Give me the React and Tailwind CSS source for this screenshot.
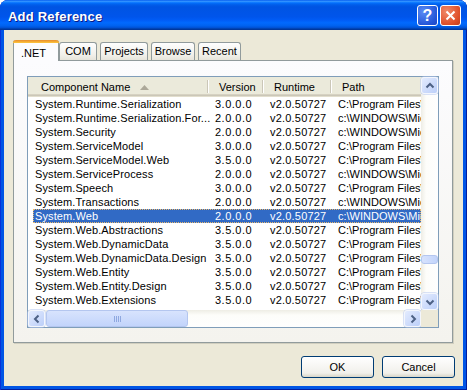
import React from "react";

const ROWS = [
  ["System.Runtime.Serialization", "3.0.0.0", "C:\\Program Files\\"],
  ["System.Runtime.Serialization.For...", "2.0.0.0", "c:\\WINDOWS\\Mic"],
  ["System.Security", "2.0.0.0", "c:\\WINDOWS\\Mic"],
  ["System.ServiceModel", "3.0.0.0", "C:\\Program Files\\"],
  ["System.ServiceModel.Web", "3.5.0.0", "C:\\Program Files\\"],
  ["System.ServiceProcess", "2.0.0.0", "c:\\WINDOWS\\Mic"],
  ["System.Speech", "3.0.0.0", "C:\\Program Files\\"],
  ["System.Transactions", "2.0.0.0", "c:\\WINDOWS\\Mic"],
  ["System.Web", "2.0.0.0", "c:\\WINDOWS\\Mic", true],
  ["System.Web.Abstractions", "3.5.0.0", "C:\\Program Files\\"],
  ["System.Web.DynamicData", "3.5.0.0", "C:\\Program Files\\"],
  ["System.Web.DynamicData.Design", "3.5.0.0", "C:\\Program Files\\"],
  ["System.Web.Entity", "3.5.0.0", "C:\\Program Files\\"],
  ["System.Web.Entity.Design", "3.5.0.0", "C:\\Program Files\\"],
  ["System.Web.Extensions", "3.5.0.0", "C:\\Program Files\\"],
];

const ARROWS = {
  up: "M1.5 6.5 L5 3 L8.5 6.5",
  down: "M1.5 3.5 L5 7 L8.5 3.5",
  left: "M6.5 1.5 L3 5 L6.5 8.5",
  right: "M3.5 1.5 L7 5 L3.5 8.5",
};

const Arrow = ({ dir }) => (
  <svg width="10" height="10" viewBox="0 0 10 10">
    <path d={ARROWS[dir]} fill="none" stroke="#4d6185" strokeWidth="2" />
  </svg>
);

const ScrollButton = ({ dir }) => (
  <div className="w-[17px] h-[17px] shrink-0 rounded-[3px] border border-[#f3f6fd] bg-[linear-gradient(135deg,#e3ebfe,#bccff9)] shadow-[0_0_0_0.5px_#b4c6ef] flex items-center justify-center">
    <Arrow dir={dir} />
  </div>
);

const Tab = ({ label, width }) => (
  <div
    className={`${width} h-[18px] shrink-0 rounded-t-[3px] border border-b-0 border-[#919b9c] bg-[linear-gradient(#fefefe,#f1f0ea_70%,#e6e4da)] flex items-center justify-center`}
  >
    {label}
  </div>
);

const HeaderCell = ({ label, width, pad, sort }) => (
  <div className={`${width} h-full shrink-0 flex items-center justify-between`}>
    <div className={`${pad} flex items-center gap-[10px]`}>
      <span>{label}</span>
      {sort && (
        <svg width="9" height="5" viewBox="0 0 9 5">
          <polygon points="0,5 4.5,0 9,5" fill="#aca899" />
        </svg>
      )}
    </div>
    <div className="w-[2px] h-[13px] mb-[2px] border-l border-[#cbc7b8] border-r border-r-white" />
  </div>
);

const DialogButton = ({ label }) => (
  <button className="w-[73px] h-[22px] rounded-[3px] border border-[#003c74] bg-[linear-gradient(#ffffff,#f1f0eb_80%,#d8d5c7)] text-black text-[11px]">
    {label}
  </button>
);

export default function App() {
  return (
    <div className="w-[467px] h-[390px] bg-white overflow-hidden font-['Liberation_Sans',Arial,sans-serif] text-[11px] text-black">
      <div className="w-full h-full rounded-t-[8px] bg-[#0055e5] flex flex-col shadow-[inset_1px_0_0_#0831d9,inset_-1px_0_0_#001ea0,inset_0_-1px_0_#001ea0]">
        {/* title bar */}
        <div className="h-[30px] shrink-0 rounded-t-[8px] bg-[linear-gradient(#0058ee_0%,#3593ff_4%,#288eff_6%,#127dff_8%,#036ffc_10%,#0262ee_14%,#0057e5_20%,#0054e3_24%,#0055eb_56%,#005bf5_66%,#026afe_76%,#0062ef_86%,#0052d6_92%,#0040ab_96%,#003092_100%)] flex items-center pl-[8px] pr-[6px]">
          <span className="flex-1 pt-[3px] text-white font-bold text-[13px] tracking-[0.2px] [text-shadow:1px_1px_0_#0a1883]">
            Add Reference
          </span>
          <div className="w-[21px] h-[21px] mt-[1px] rounded-[3px] border border-white bg-[radial-gradient(circle_at_30%_30%,#5a8cf5,#2456d8_70%,#1c46c4)] flex items-center justify-center text-white font-bold text-[16px] leading-none">
            ?
          </div>
          <div className="w-[21px] h-[21px] mt-[1px] ml-[2px] rounded-[3px] border border-white bg-[radial-gradient(circle_at_30%_30%,#f08a6a,#e0512b_65%,#c23d1c)] flex items-center justify-center">
            <svg width="11" height="11" viewBox="0 0 11 11">
              <path d="M1.5 1.5 L9.5 9.5 M9.5 1.5 L1.5 9.5" stroke="white" strokeWidth="2" />
            </svg>
          </div>
        </div>

        {/* client area */}
        <div className="flex-1 mx-[4px] mb-[4px] bg-[#ece9d8] pt-[10px] pl-[9px] flex flex-col">
          {/* tabs */}
          <div className="flex items-end h-[20px] relative z-10">
            <div className="w-[46px] h-[21px] -mb-[1px] shrink-0 rounded-t-[3px] border border-b-0 border-[#919b9c] border-t-0 bg-[#fcfcfe] flex flex-col">
              <div className="h-[3px] -mx-[1px] rounded-t-[3px] bg-[linear-gradient(#e68b2c,#ffc73c)]" />
              <div className="flex-1 pl-[7px] pt-[2px]">.NET</div>
            </div>
            <Tab label="COM" width="w-[38px]" />
            <div className="w-[3px]" />
            <Tab label="Projects" width="w-[48px]" />
            <div className="w-[3px]" />
            <Tab label="Browse" width="w-[44px]" />
            <div className="w-[3px]" />
            <Tab label="Recent" width="w-[43px]" />
          </div>

          {/* tab page */}
          <div className="w-[440px] h-[283px] border border-[#919b9c] bg-[linear-gradient(#fcfcfe,#f4f3ee)] pt-[15px] pl-[13px] shadow-[1px_1px_0_#d0cebf]">
            {/* list view */}
            <div className="w-[412px] h-[252px] border border-[#7f9db9] bg-white grid grid-cols-[393px_17px] grid-rows-[233px_17px]">
              <div className="overflow-hidden">
                <div className="h-[20px] flex bg-[#ebeadb] shadow-[inset_0_-1px_0_#e2decd,inset_0_-2px_0_#cbc7b8,inset_0_-3px_0_#d6d2c2]">
                  <HeaderCell label="Component Name" width="w-[181px]" pad="pl-[13px]" sort />
                  <HeaderCell label="Version" width="w-[55px]" pad="pl-[10px]" />
                  <HeaderCell label="Runtime" width="w-[68px]" pad="pl-[10px]" />
                  <div className="flex-1 flex items-center pl-[10px]">Path</div>
                </div>
                <div className="flex flex-col">
                  {ROWS.map(([name, version, path, selected]) => (
                    <div
                      key={name}
                      className={`h-[14px] ml-[5px] flex items-center whitespace-nowrap ${
                        selected
                          ? "bg-[#316ac5] text-white outline-1 outline-dotted outline-[#e9b96e] -outline-offset-1"
                          : ""
                      }`}
                    >
                      <div className="w-[176px] shrink-0 pl-[2px] tracking-[0.1px]">{name}</div>
                      <div className="w-[55px] shrink-0 pl-[6px] tracking-[0.5px]">{version}</div>
                      <div className="w-[68px] shrink-0 pl-[6px] tracking-[0.2px]">v2.0.50727</div>
                      <div className="flex-1 pl-[6px] overflow-hidden">{path}</div>
                    </div>
                  ))}
                </div>
              </div>

              {/* vertical scrollbar */}
              <div className="flex flex-col bg-[linear-gradient(90deg,#eeede5,#fdfdfa_30%,#fefefe)]">
                <ScrollButton dir="up" />
                <div className="flex-1 flex flex-col pt-[161px]">
                  <div className="h-[9px] rounded-[3px] border border-[#b4c6ef] bg-[linear-gradient(90deg,#d8e3fd,#c2d4fb)]" />
                </div>
                <ScrollButton dir="down" />
              </div>

              {/* horizontal scrollbar */}
              <div className="flex bg-[linear-gradient(#eeede5,#fdfdfa_30%,#fefefe)]">
                <ScrollButton dir="left" />
                <div className="flex-1 pl-[1px]">
                  <div className="w-[142px] h-[17px] rounded-[3px] border border-[#b4c6ef] bg-[linear-gradient(#d8e3fd,#c2d4fb)] flex items-center justify-center gap-[1px]">
                    <div className="w-[1px] h-[6px] bg-[#8fa8e0]" />
                    <div className="w-[1px] h-[6px] bg-[#8fa8e0]" />
                    <div className="w-[1px] h-[6px] bg-[#8fa8e0]" />
                    <div className="w-[1px] h-[6px] bg-[#8fa8e0]" />
                  </div>
                </div>
                <ScrollButton dir="right" />
              </div>
              <div className="bg-[#ece9d8]" />
            </div>
          </div>

          {/* buttons */}
          <div className="flex justify-end gap-[8px] mt-[13px] pr-[8px]">
            <DialogButton label="OK" />
            <DialogButton label="Cancel" />
          </div>
        </div>
      </div>
    </div>
  );
}
